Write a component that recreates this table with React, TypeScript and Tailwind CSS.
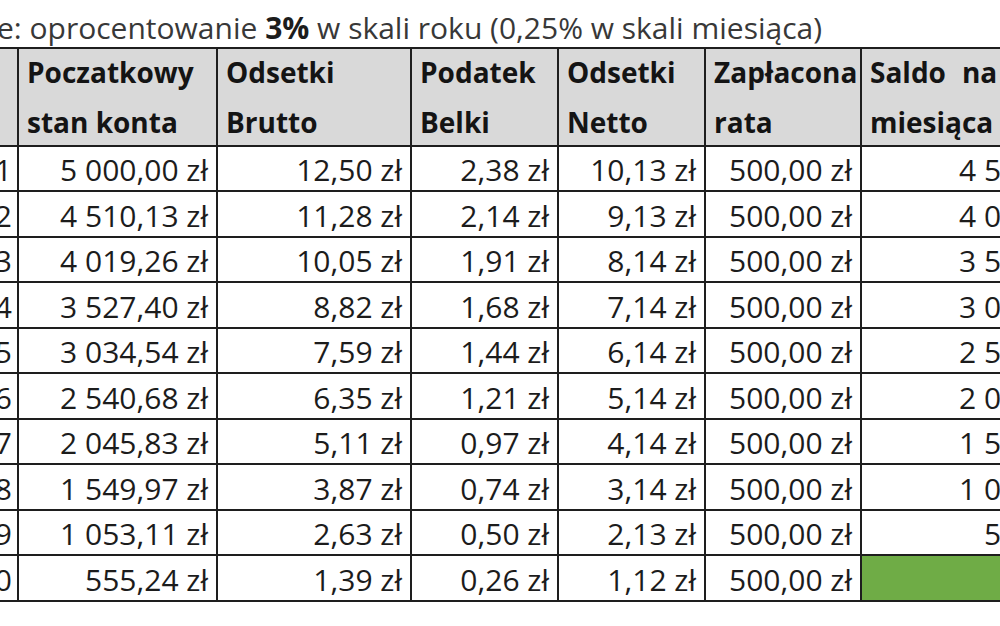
import React from "react";

type Row = { n: string; a: string; b: string; c: string; d: string; e: string; f: string; green?: boolean };

const rows: Row[] = [
  { n: "1", a: "5 000,00 zł", b: "12,50 zł", c: "2,38 zł", d: "10,13 zł", e: "500,00 zł", f: "4 510,13 zł" },
  { n: "2", a: "4 510,13 zł", b: "11,28 zł", c: "2,14 zł", d: "9,13 zł", e: "500,00 zł", f: "4 019,26 zł" },
  { n: "3", a: "4 019,26 zł", b: "10,05 zł", c: "1,91 zł", d: "8,14 zł", e: "500,00 zł", f: "3 527,40 zł" },
  { n: "4", a: "3 527,40 zł", b: "8,82 zł", c: "1,68 zł", d: "7,14 zł", e: "500,00 zł", f: "3 034,54 zł" },
  { n: "5", a: "3 034,54 zł", b: "7,59 zł", c: "1,44 zł", d: "6,14 zł", e: "500,00 zł", f: "2 540,68 zł" },
  { n: "6", a: "2 540,68 zł", b: "6,35 zł", c: "1,21 zł", d: "5,14 zł", e: "500,00 zł", f: "2 045,83 zł" },
  { n: "7", a: "2 045,83 zł", b: "5,11 zł", c: "0,97 zł", d: "4,14 zł", e: "500,00 zł", f: "1 549,97 zł" },
  { n: "8", a: "1 549,97 zł", b: "3,87 zł", c: "0,74 zł", d: "3,14 zł", e: "500,00 zł", f: "1 053,11 zł" },
  { n: "9", a: "1 053,11 zł", b: "2,63 zł", c: "0,50 zł", d: "2,13 zł", e: "500,00 zł", f: "555,24 zł" },
  { n: "10", a: "555,24 zł", b: "1,39 zł", c: "0,26 zł", d: "1,12 zł", e: "500,00 zł", f: "56,36 zł", green: true },
];

const font = { fontFamily: '"Open Sans", "Noto Sans", sans-serif' };

function Cell({ children, green, pr }: { children: React.ReactNode; green?: boolean; pr: string }) {
  return (
    <div
      className={`flex items-end justify-end whitespace-nowrap pb-[5px] text-[30px] leading-none text-[#1c1c1c] ${
        green ? "bg-[#6fac46]" : "bg-white"
      } ${pr}`}
    >
      {children}
    </div>
  );
}

function Head({ l1, l2 }: { l1: React.ReactNode; l2?: string }) {
  return (
    <div className="h-[96px] overflow-hidden whitespace-nowrap bg-[#d9d9d9] pl-2 text-[28px] font-bold leading-[50px] text-[#141414]">
      <div className="-mt-[2px] flex flex-col">
        <span>{l1}</span>
        <span>{l2 ?? "\u00a0"}</span>
      </div>
    </div>
  );
}

export default function App() {
  return (
    <div className="h-[626px] w-[1000px] overflow-hidden bg-white" style={font}>
      <div className="ml-[-3px] flex h-[47px] items-end whitespace-nowrap pb-[4px] text-[30px] leading-none text-[#383838]">
        <span>
          e: oprocentowanie <b className="text-[#1c1c1c]">3%</b> w skali roku (0,25% w skali miesiąca)
        </span>
      </div>
      <div className="ml-[-44px] grid w-max grid-cols-[59px_197px_192px_145px_145px_154px_253px] gap-[2px] bg-[#1e1e1e] p-[2px]">
        <div className="h-[96px] bg-[#d9d9d9]" />
        <Head l1="Poczatkowy" l2="stan konta" />
        <Head l1="Odsetki" l2="Brutto" />
        <Head l1="Podatek" l2="Belki" />
        <Head l1="Odsetki" l2="Netto" />
        <Head l1="Zapłacona" l2="rata" />
        <Head
          l1={
            <>
              Saldo<span className="ml-[16px]">na</span>
            </>
          }
          l2="miesiąca"
        />
        {rows.map((r, i) => (
          <React.Fragment key={r.n}>
            <div className={`flex items-end justify-end bg-white pb-[5px] pr-[5px] text-[30px] leading-none text-[#1c1c1c] ${i % 2 === 0 ? "h-[43px]" : "h-[44px]"}`}>
              {r.n}
            </div>
            <Cell pr="pr-[8px]">{r.a}</Cell>
            <Cell pr="pr-[8px]">{r.b}</Cell>
            <Cell pr="pr-[8px]">{r.c}</Cell>
            <Cell pr="pr-[8px]">{r.d}</Cell>
            <Cell pr="pr-[8px]">{r.e}</Cell>
            <Cell pr="pr-[8px]" green={r.green}>
              {r.green ? "" : r.f}
            </Cell>
          </React.Fragment>
        ))}
      </div>
    </div>
  );
}
